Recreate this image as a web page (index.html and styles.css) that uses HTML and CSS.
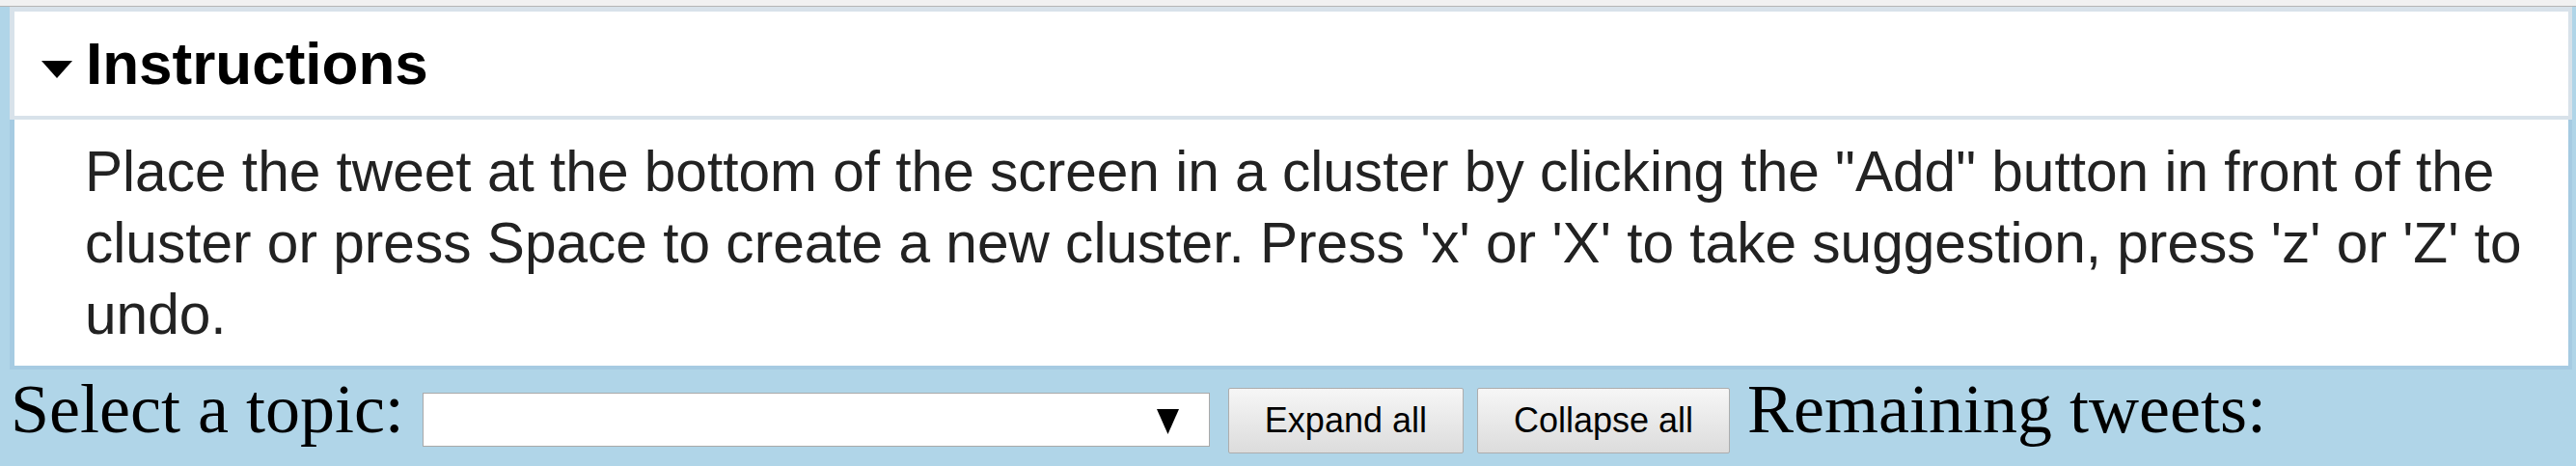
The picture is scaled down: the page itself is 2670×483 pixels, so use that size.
FILE: index.html
```html
<!DOCTYPE html>
<html lang="en">
<head>
<meta charset="utf-8">
<title>Tweet clustering</title>
<link rel="stylesheet" href="styles.css">
</head>
<body>
<div class="topbar"></div>
<div class="instructions">
  <div class="summary">
    <svg class="marker" width="32" height="18" viewBox="0 0 32 18"><polygon points="0,0 32,0 16,18" fill="#000"/></svg>
    <span class="summary-title">Instructions</span>
  </div>
  <div class="content">
    <p class="content-text">Place the tweet at the bottom of the screen in a cluster by clicking the "Add" button in front of the cluster or press Space to create a new cluster. Press 'x' or 'X' to take suggestion, press 'z' or 'Z' to undo.</p>
  </div>
</div>
<div class="controls">
  <span class="label">Select a topic:</span>
  <div class="select">
    <svg class="select-arrow" width="23" height="26" viewBox="0 0 23 26"><polygon points="0,0 23,0 11.5,26" fill="#000"/></svg>
  </div>
  <button class="btn btn-expand" type="button">Expand all</button>
  <button class="btn btn-collapse" type="button">Collapse all</button>
  <span class="label label-remaining">Remaining tweets:</span>
</div>
</body>
</html>
```
FILE: styles.css
```css
html, body {
  margin: 0;
  padding: 0;
}
body {
  background: #b0d5e8;
  width: 2670px;
  height: 483px;
  overflow: hidden;
}
.topbar {
  height: 6px;
  background: #f1f1f1;
  border-bottom: 1px solid #b5b5b5;
}
.instructions {
  margin: 0 4px 0 10px;
}
.summary {
  display: flex;
  align-items: center;
  height: 108px;
  background: #ffffff;
  border-style: solid;
  border-color: #d8e2ea;
  border-width: 5px 4px 4px 5px;
}
.marker {
  margin-left: 28px;
  margin-right: 14px;
  margin-top: 12px;
  flex: none;
}
.summary-title {
  font-family: "Liberation Sans", Arial, sans-serif;
  font-weight: bold;
  font-size: 62px;
  color: #000;
  line-height: 1;
}
.content {
  background: #ffffff;
  height: 255px;
  border-style: solid;
  border-color: #a6cbe2;
  border-width: 0 4px 4px 5px;
  box-sizing: content-box;
}
.content-text {
  margin: 0;
  padding: 17px 8px 0 73px;
  font-family: "Liberation Sans", Arial, sans-serif;
  font-size: 58.6px;
  line-height: 74px;
  color: #222222;
}
.controls {
  display: flex;
  align-items: flex-start;
  padding-left: 11px;
}
.label {
  font-family: "Liberation Serif", "Times New Roman", serif;
  font-size: 72px;
  line-height: 72px;
  color: #000;
  margin-top: 5px;
}
.select {
  width: 814px;
  height: 54px;
  margin: 24px 0 0 19px;
  background: #ffffff;
  border: 1px solid #a9a9a9;
  display: flex;
  align-items: center;
  justify-content: flex-end;
}
.select-arrow {
  margin-right: 31px;
  margin-top: 4px;
}
.btn {
  height: 68px;
  margin-top: 19px;
  padding: 0 37px;
  font-family: "Liberation Sans", Arial, sans-serif;
  font-size: 36px;
  color: #000;
  background: linear-gradient(#f6f6f6, #dcdcdc);
  border: 1px solid #adadad;
  border-radius: 2px;
}
.btn-expand {
  margin-left: 19px;
}
.btn-collapse {
  margin-left: 14px;
}
.label-remaining {
  margin-left: 18px;
}
```
